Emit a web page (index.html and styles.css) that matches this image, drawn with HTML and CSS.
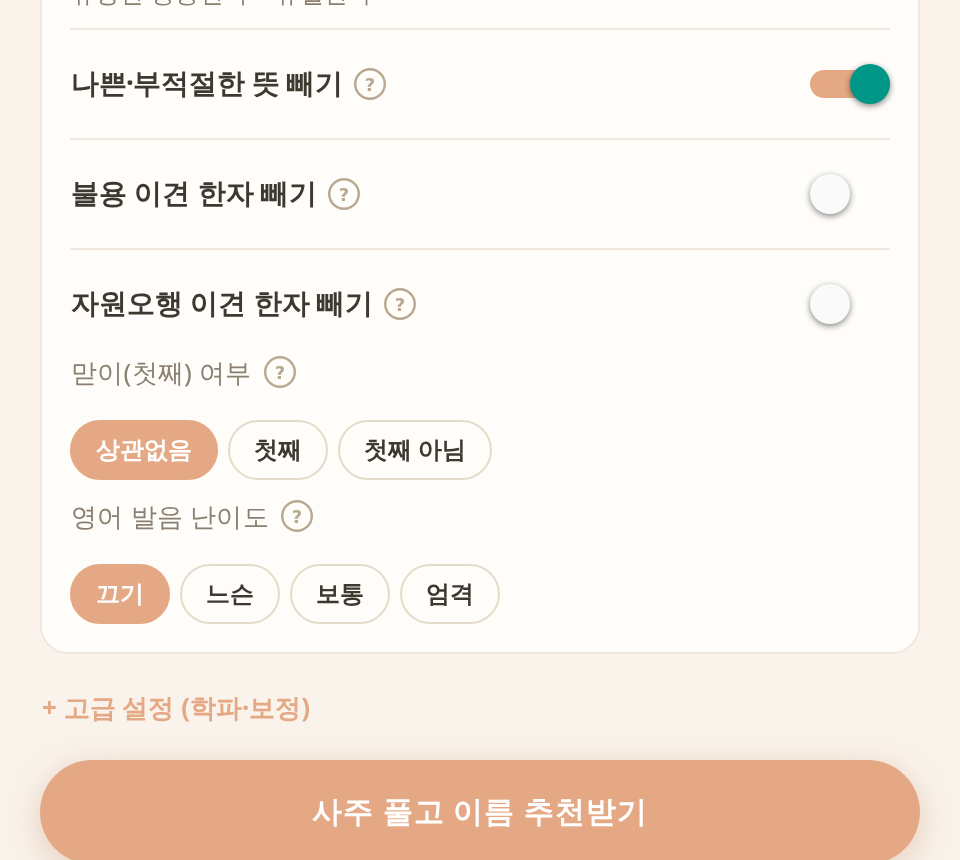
FILE: index.html
```html
<!DOCTYPE html>
<html>
<head>
<meta charset="utf-8">
<title>이름 추천</title>
<link rel="stylesheet" href="styles.css">
</head>
<body>
<main class="page">
  <section class="card">
    <div class="row row-intro"><span class="cut-text">유성한 응용한 수 · 유월한다</span></div>
    <div class="row">
      <div class="title"><span>나쁜<span class="dot">·</span>부적절한 뜻 빼기</span> <span class="help"><svg viewBox="0 0 32 32"><circle cx="16" cy="16" r="14.8"/><text x="16" y="22.5">?</text></svg></span></div>
      <span class="toggle on"><span class="knob"></span></span>
    </div>
    <div class="row">
      <div class="title">불용 이견 한자 빼기 <span class="help"><svg viewBox="0 0 32 32"><circle cx="16" cy="16" r="14.8"/><text x="16" y="22.5">?</text></svg></span></div>
      <span class="toggle"><span class="knob"></span></span>
    </div>
    <div class="row row-last">
      <div class="title">자원오행 이견 한자 빼기 <span class="help"><svg viewBox="0 0 32 32"><circle cx="16" cy="16" r="14.8"/><text x="16" y="22.5">?</text></svg></span></div>
      <span class="toggle"><span class="knob"></span></span>
    </div>
    <div class="group">
      <div class="label">맏이(첫째) 여부 <span class="help"><svg viewBox="0 0 32 32"><circle cx="16" cy="16" r="14.8"/><text x="16" y="22.5">?</text></svg></span></div>
      <div class="chips"><span class="chip active">상관없음</span><span class="chip">첫째</span><span class="chip">첫째 아님</span></div>
    </div>
    <div class="group">
      <div class="label">영어 발음 난이도 <span class="help"><svg viewBox="0 0 32 32"><circle cx="16" cy="16" r="14.8"/><text x="16" y="22.5">?</text></svg></span></div>
      <div class="chips"><span class="chip active">끄기</span><span class="chip">느슨</span><span class="chip">보통</span><span class="chip">엄격</span></div>
    </div>
  </section>
  <div class="advanced">+ 고급 설정 (학파·보정)</div>
  <button class="submit">사주 풀고 이름 추천받기</button>
</main>
</body>
</html>
```
FILE: styles.css
```css
html, body { margin: 0; padding: 0; height: 860px; overflow: hidden; background: #faf3eb; }
body { font-family: "Noto Sans", sans-serif; color: #3d3830; }
.page { padding: 0 40px; margin-top: -54px; will-change: transform; }
.card { background: #fffdf9; border: 2px solid #f0e8dc; border-radius: 28px; padding: 0 28px 28px; }
.row { display: flex; align-items: center; justify-content: space-between; height: 108px; border-bottom: 2px solid #f0e8dc; }
.row-intro { height: 82px; align-items: flex-start; padding-top: 27px; box-sizing: border-box; }
.row-last { border-bottom: 0; margin-bottom: -4px; }
.cut-text { font-size: 24px; line-height: 36px; letter-spacing: 0.4px; padding-left: 1px; color: #8a7f70; }
.title { display: flex; align-items: center; gap: 11px; padding: 0 0 4px 1px; font-size: 28px; font-weight: 700; line-height: 40px; }
.dot { margin: 0 -1px; }
.help { display: inline-flex; width: 32px; height: 32px; flex: none; margin-top: 4px; }
.help svg { width: 32px; height: 32px; }
.help circle { fill: none; stroke: #b8a890; stroke-width: 2.4; }
.help text { font-family: "DejaVu Sans", sans-serif; font-weight: 700; font-size: 18px; fill: #b8a890; text-anchor: middle; }
.toggle { position: relative; width: 80px; height: 28px; border-radius: 14px; background: transparent; }
.toggle.on { background: #e5a885; }
.knob { position: absolute; top: -6px; left: 0; width: 40px; height: 40px; border-radius: 50%; background: #fafafa; box-shadow: 0 2px 6px rgba(0,0,0,.48); }
.toggle.on .knob { left: 40px; background: #009688; }
.group { display: flex; flex-direction: column; }
.label { display: flex; align-items: center; gap: 12px; padding: 0 0 2px 1px; font-size: 26px; line-height: 36px; letter-spacing: 0.26px; color: #8a7f70; }
.label .help { margin-top: 0; }
.chips { display: flex; gap: 10px; margin-top: 28px; margin-bottom: 18px; }
.group:last-child .chips { margin-bottom: 0; }
.chip { box-sizing: border-box; height: 60px; min-width: 100px; padding: 0 24px 2px; display: flex; align-items: center; justify-content: center; border: 2px solid #e4dccb; border-radius: 30px; font-size: 24px; font-weight: 700; color: #3d3830; background: #fffdf9; }
.chip.active { background: #e5a885; border-color: #e5a885; color: #fff; }
.advanced { margin-top: 33px; padding-left: 2px; font-size: 26px; font-weight: 700; line-height: 40px; color: #e5a885; }
.submit { display: block; width: 100%; height: 104px; margin-top: 33px; padding-bottom: 2px; border: 0; border-radius: 52px; background: #e5a885; color: #fff; font-family: inherit; font-size: 30px; font-weight: 700; letter-spacing: 0.9px; box-shadow: 0 8px 32px rgba(190,130,95,.35); }
```
